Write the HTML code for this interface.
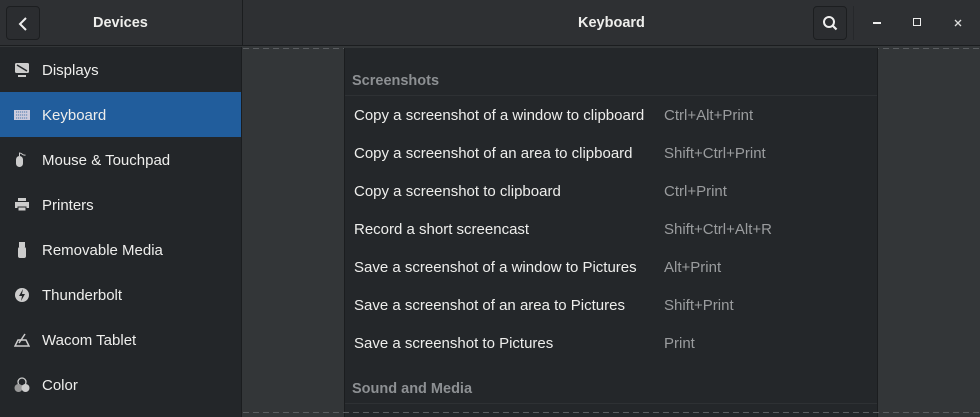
<!DOCTYPE html>
<html><head><meta charset="utf-8"><style>
*{margin:0;padding:0;box-sizing:border-box}
body{width:980px;height:417px;overflow:hidden;background:#333638;font-family:"Liberation Sans",sans-serif;color:#eeeeec;position:relative;font-size:15px}
.hb{position:absolute;left:0;top:0;width:980px;height:46px;background:#2e3033;border-bottom:1px solid #1b1d1f}
.vs{position:absolute;left:242px;top:0;width:1px;height:46px;background:#1b1d1f}
.btn{position:absolute;top:6px;width:34px;height:34px;border:1px solid #1c1e20;border-radius:4px;background:#2b2d30}
.title{position:absolute;top:15px;font-weight:bold;font-size:14.5px;color:#eeeeec}
.side{position:absolute;left:0;top:47px;width:242px;height:370px;background:#232629;border-right:1px solid #1b1d1f}
.it{height:45px;display:flex;align-items:center;padding-left:42px;position:relative;padding-top:1px}
.it.sel{background:#215d9c}
.ic{position:absolute;left:14px;top:15px;width:16px;height:16px}
.list{position:absolute;left:344px;top:48px;width:534px;height:369px;background:#24272a;border-left:1px solid #1b1d1f;border-right:1px solid #1b1d1f}
.dash{position:absolute;left:243px;width:737px;height:1px;background:repeating-linear-gradient(90deg,#5a5d60 0 6px,transparent 6px 10px)}
.hd{position:absolute;left:7px;font-weight:bold;color:#8d9093;font-size:14.5px}
.sep{position:absolute;left:0;width:532px;height:1px;background:#2e3134}
.row{position:absolute;left:9px;font-size:15px}
.acc{position:absolute;left:310px;color:#9a9c9e}
</style></head><body>
<div class="hb"></div>
<div class="vs"></div>
<div class="btn" style="left:6px"><svg width="34" height="34" viewBox="0 0 34 34"><path d="M19 11l-6 6 6 6" stroke="#eee" stroke-width="2" fill="none"/></svg></div>
<div class="title" style="left:93px">Devices</div>
<div class="title" style="left:578px">Keyboard</div>
<div class="btn" style="left:813px"><svg width="34" height="34" viewBox="0 0 34 34"><circle cx="15" cy="15" r="5" stroke="#eee" stroke-width="2" fill="none"/><path d="M18.5 18.5l4 4" stroke="#eee" stroke-width="2.2"/></svg></div>
<div style="position:absolute;left:853px;top:6px;width:1px;height:34px;background:#26282b"></div>
<div style="position:absolute;left:873px;top:22px;width:8px;height:1.5px;background:#eee"></div>
<div style="position:absolute;left:913px;top:18px;width:8px;height:8px;border:1.5px solid #eee"></div>
<svg style="position:absolute;left:954px;top:19px" width="8" height="8" viewBox="0 0 8 8"><path d="M1 1l6 6M7 1l-6 6" stroke="#ddd" stroke-width="1.3"/></svg>
<div class="side">
<div class="it"><svg class="ic" viewBox="0 0 16 16"><rect x="1" y="1" width="14" height="10" rx="1.5" fill="#ccc"/><path d="M3 3l10 6" stroke="#232629" stroke-width="1.5"/><rect x="4" y="13" width="8" height="2" fill="#ccc"/></svg>Displays</div>
<div class="it sel"><svg class="ic" viewBox="0 0 16 16"><rect x="0" y="3" width="16" height="10" fill="#ccd"/><path d="M2 5h12M2 8h12M2 11h12" stroke="#215d9c" stroke-width="0.8" stroke-dasharray="1.2 0.8"/></svg>Keyboard</div>
<div class="it"><svg class="ic" viewBox="0 0 16 16"><rect x="2" y="4" width="7" height="11" rx="3.5" fill="#ccc"/><path d="M5.5 4V1c3 0 3 3 6 2" stroke="#ccc" fill="none"/></svg>Mouse &amp; Touchpad</div>
<div class="it"><svg class="ic" viewBox="0 0 16 16"><rect x="4" y="1" width="8" height="3" fill="#ccc"/><rect x="1" y="5" width="14" height="6" fill="#ccc"/><rect x="4" y="10" width="8" height="4" fill="#ccc" stroke="#232629"/></svg>Printers</div>
<div class="it"><svg class="ic" viewBox="0 0 16 16"><rect x="5" y="0" width="6" height="5" fill="#ccc"/><rect x="4" y="5" width="8" height="11" rx="2" fill="#ccc"/></svg>Removable Media</div>
<div class="it"><svg class="ic" viewBox="0 0 16 16"><circle cx="8" cy="8" r="7" fill="#ccc"/><path d="M9 2L5 9h3l-1 5 4-7H8z" fill="#232629"/></svg>Thunderbolt</div>
<div class="it"><svg class="ic" viewBox="0 0 16 16"><path d="M1 14h14l-3-6H4z" fill="none" stroke="#ccc" stroke-width="1.5"/><path d="M5 11l6-9" stroke="#ccc" stroke-width="1.5"/></svg>Wacom Tablet</div>
<div class="it"><svg class="ic" viewBox="0 0 16 16"><circle cx="8" cy="5" r="4" fill="none" stroke="#ccc" stroke-width="1.3"/><circle cx="4.5" cy="11" r="4" fill="#999"/><circle cx="11.5" cy="11" r="4" fill="#ccc"/></svg>Color</div>
</div>
<div class="dash" style="top:48px"></div>
<div class="list">
<div class="hd" style="top:25px">Screenshots</div>
<div class="sep" style="top:47px"></div>
<div class="row" style="top:59px">Copy a screenshot of a window to clipboard<span class="acc">Ctrl+Alt+Print</span></div>
<div class="row" style="top:97px">Copy a screenshot of an area to clipboard<span class="acc">Shift+Ctrl+Print</span></div>
<div class="row" style="top:135px">Copy a screenshot to clipboard<span class="acc">Ctrl+Print</span></div>
<div class="row" style="top:173px">Record a short screencast<span class="acc">Shift+Ctrl+Alt+R</span></div>
<div class="row" style="top:211px">Save a screenshot of a window to Pictures<span class="acc">Alt+Print</span></div>
<div class="row" style="top:249px">Save a screenshot of an area to Pictures<span class="acc">Shift+Print</span></div>
<div class="row" style="top:287px">Save a screenshot to Pictures<span class="acc">Print</span></div>
<div class="hd" style="top:333px">Sound and Media</div>
<div class="sep" style="top:355px"></div>
</div>
<div class="dash" style="top:412px"></div>
</body></html>
